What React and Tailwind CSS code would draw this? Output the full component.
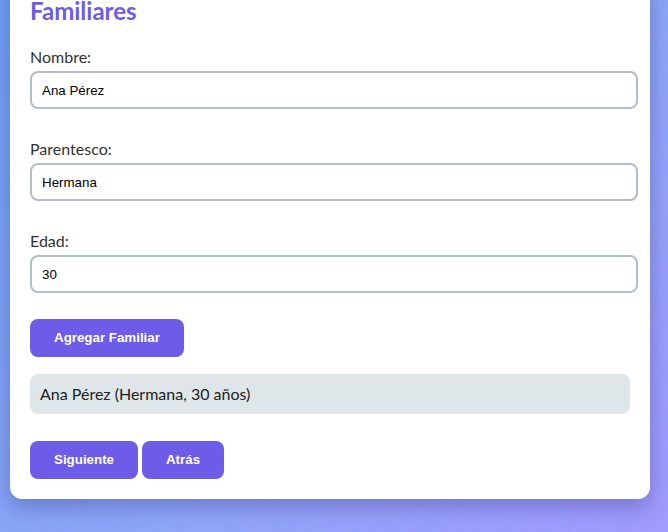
import React from "react";

export default function App() {
  const fields = [
    { label: "Nombre:", value: "Ana Pérez" },
    { label: "Parentesco:", value: "Hermana" },
    { label: "Edad:", value: "30" },
  ];
  return (
    <div className="w-[668px] h-[532px] overflow-hidden bg-[linear-gradient(135deg,#6fa0f3_0%,#8ea6f8_55%,#a29bfe_100%)]">
      <div className="ml-[10px] mt-[-24px] w-[640px] bg-white rounded-[12px] px-[20px] pt-[20px] pb-[20px] shadow-[0_8px_22px_rgba(40,40,120,0.35)]">
        <h2 className="text-[24px] leading-[30px] font-bold text-[#6c5ce7] mb-[19px] font-['Lato',sans-serif]">
          Familiares
        </h2>
        {fields.map((f, i) => (
          <div key={i} className={i < 2 ? "mb-[28px]" : ""}>
            <label className="block text-[16px] leading-[24px] text-[#333] mb-[2px] font-['Lato',sans-serif]">
              {f.label}
            </label>
            <input
              readOnly
              value={f.value}
              className="block w-[608px] h-[38px] border-2 border-[#b2bec3] rounded-[8px] px-[10px] text-[13.33px] text-black bg-white font-['Liberation_Sans',Arial,sans-serif] outline-none"
            />
          </div>
        ))}
        <button className="mt-[26px] h-[38px] px-6 rounded-[8px] bg-[#6c5ce7] text-white font-bold text-[13.33px] font-['Liberation_Sans',Arial,sans-serif]">
          Agregar Familiar
        </button>
        <div className="mt-[17px] h-[40px] flex items-center px-[10px] rounded-[8px] bg-[#dfe6e9] text-[16px] text-[#222] font-['Lato',sans-serif]">
          Ana Pérez (Hermana, 30 años)
        </div>
        <div className="mt-[27px] flex gap-1">
          <button className="h-[38px] px-6 rounded-[8px] bg-[#6c5ce7] text-white font-bold text-[13.33px] font-['Liberation_Sans',Arial,sans-serif]">
            Siguiente
          </button>
          <button className="h-[38px] px-6 rounded-[8px] bg-[#6c5ce7] text-white font-bold text-[13.33px] font-['Liberation_Sans',Arial,sans-serif]">
            Atrás
          </button>
        </div>
      </div>
    </div>
  );
}
